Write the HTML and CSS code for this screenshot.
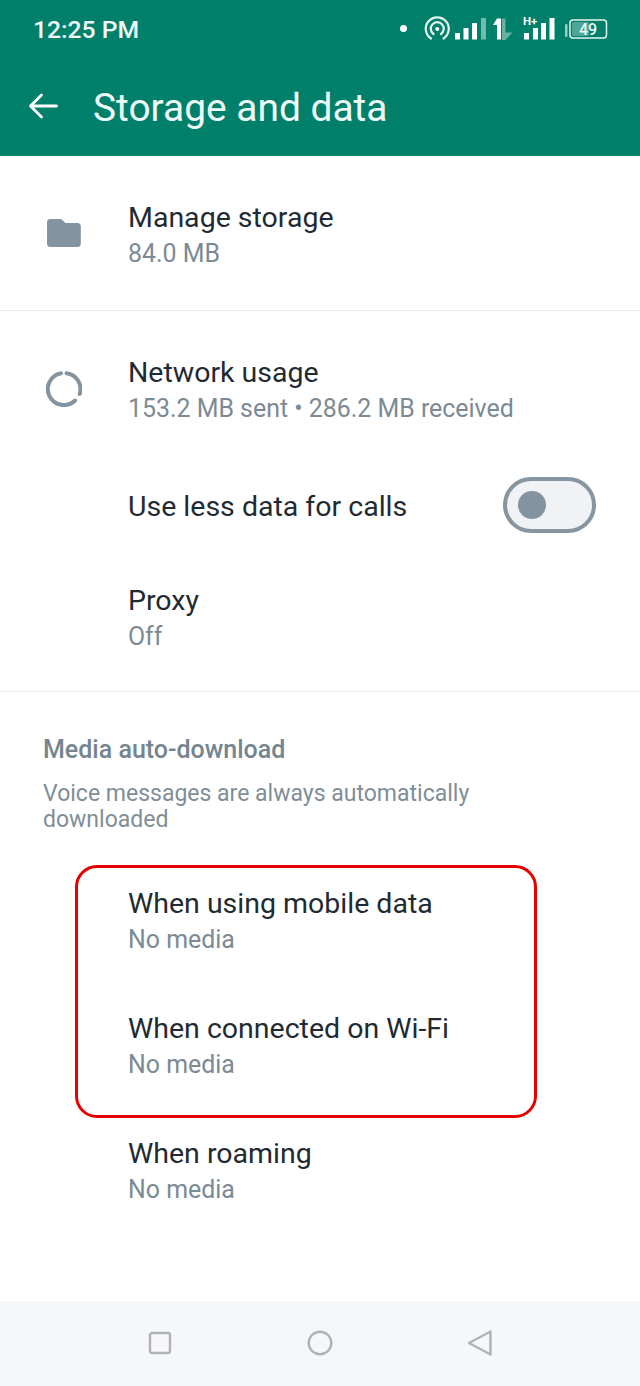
FILE: index.html
```html
<!DOCTYPE html>
<html lang="en">
<head>
<meta charset="utf-8">
<title>Storage and data</title>
<link rel="stylesheet" href="styles.css">
</head>
<body>
<div class="screen">
  <header class="appbar">
    <div class="status">
      <span class="time">12:25 PM</span>
      <svg class="status-icons" width="210" height="38" viewBox="400 10 210 38" fill="#fff">
        <circle cx="403.500" cy="28.500" r="3.500"/>
        <g fill="none" stroke="#e6f4f0" stroke-width="2.200" stroke-linecap="round">
          <path d="M431 38.500a11.500 11.500 0 1 1 12.500 0"/>
          <path d="M433.500 34a6.500 6.500 0 1 1 7.500 0"/>
        </g>
        <circle cx="437.300" cy="29" r="2"/>
        <rect x="455" y="33" width="5" height="6.500"/>
        <rect x="463.500" y="28" width="5" height="11.500"/>
        <rect x="472" y="23" width="5" height="16.500"/>
        <rect x="481" y="18" width="5" height="21.500" opacity=".45"/>
        <path d="M493 25 497 18.500h4v21h-4V25z"/>
        <path d="M502 18.500h3.500v14h7l-7 7.500h-3.500z" opacity=".4"/>
        <text class="hplus" x="523" y="25">H+</text>
        <rect x="524" y="33" width="5" height="6.500"/>
        <rect x="533" y="28" width="5" height="11.500"/>
        <rect x="541" y="23" width="5" height="16.500"/>
        <rect x="549.500" y="18" width="5" height="21.500"/>
        <rect x="565" y="24" width="2.500" height="13" rx="1" opacity=".6"/>
        <rect x="570" y="20" width="36.500" height="18" rx="3" fill="none" stroke="#e6f4f0" stroke-width="1.500"/>
        <rect x="572" y="22" width="17" height="14" rx="1" fill="#fff" opacity=".3"/>
        <text class="batt" x="588" y="34.500" text-anchor="middle">49</text>
      </svg>
    </div>
    <div class="toolbar">
      <svg class="back" width="30" height="30" viewBox="0 0 30 30" fill="none" stroke="#fff" stroke-width="2.800" stroke-linecap="round" stroke-linejoin="round">
        <path d="M28.500 15H2.500M13.500 4 2.500 15l11 11"/>
      </svg>
      <h1 class="title">Storage and data</h1>
    </div>
  </header>

  <main class="content">
    <section class="group group-first">
      <div class="row">
        <div class="icon icon-folder">
          <svg width="34" height="28" viewBox="0 0 34 28" fill="#83939f">
            <path d="M3 0H13c1 0 1.700.3 2.400 1l3 3H30.500c2 0 3.300 1.300 3.300 3.300v17.400c0 2-1.300 3.300-3.300 3.300H3.300C1.300 28 0 26.700 0 24.700V3.300C0 1.300 1.300 0 3 0z"/>
          </svg>
        </div>
        <div class="text">
          <div class="label">Manage storage</div>
          <div class="sub">84.0 MB</div>
        </div>
      </div>
    </section>

    <section class="group">
      <div class="row">
        <div class="icon icon-ring">
          <svg width="36" height="36" viewBox="0 0 36 36" fill="none" stroke="#83939f" stroke-width="4" stroke-linecap="round">
            <path d="M15 2.300A16 16 0 1 0 29 29.500"/>
            <path d="M20.500 2.200A16 16 0 0 1 33.700 23"/>
          </svg>
        </div>
        <div class="text">
          <div class="label">Network usage</div>
          <div class="sub">153.2 MB sent • 286.2 MB received</div>
        </div>
      </div>
      <div class="row row-toggle">
        <div class="icon"></div>
        <div class="text"><div class="label label-toggle">Use less data for calls</div></div>
        <div class="switch"><span class="knob"></span></div>
      </div>
      <div class="row">
        <div class="icon"></div>
        <div class="text">
          <div class="label">Proxy</div>
          <div class="sub">Off</div>
        </div>
      </div>
    </section>

    <section class="group group-last">
      <h2 class="heading">Media auto-download</h2>
      <p class="note">Voice messages are always automatically downloaded</p>
      <div class="media-rows">
        <div class="row">
          <div class="icon"></div>
          <div class="text">
            <div class="label">When using mobile data</div>
            <div class="sub">No media</div>
          </div>
        </div>
        <div class="row">
          <div class="icon"></div>
          <div class="text">
            <div class="label">When connected on Wi-Fi</div>
            <div class="sub">No media</div>
          </div>
        </div>
        <div class="row">
          <div class="icon"></div>
          <div class="text">
            <div class="label">When roaming</div>
            <div class="sub">No media</div>
          </div>
        </div>
        <div class="highlight"></div>
      </div>
    </section>
  </main>

  <nav class="navbar">
    <svg width="26" height="26" viewBox="0 0 26 26" fill="none" stroke="#b0b2b4" stroke-width="2.400" stroke-linejoin="round"><rect x="3" y="3" width="20" height="20" rx="2"/></svg>
    <svg width="26" height="26" viewBox="0 0 26 26" fill="none" stroke="#b0b2b4" stroke-width="2.400"><circle cx="13" cy="13" r="11.300"/></svg>
    <svg width="26" height="26" viewBox="0 0 26 26" fill="none" stroke="#b0b2b4" stroke-width="2.400" stroke-linejoin="round"><path d="M23.500 1.500v23L2 13z"/></svg>
  </nav>
</div>
</body>
</html>
```
FILE: styles.css
```css
* { box-sizing: border-box; }
html, body { margin: 0; padding: 0; background: #fff; }
body { font-family: Roboto, "Noto Sans", sans-serif; }

.screen {
  width: 640px;
  height: 1386px;
  display: flex;
  flex-direction: column;
  overflow: hidden;
}

.appbar { height: 156px; background: #00806a; color: #fff; flex: none; }
.status {
  height: 58px;
  display: flex;
  align-items: center;
  justify-content: space-between;
  padding: 0 30px 0 33px;
}
.time { font-size: 24.700px; font-weight: 500; color: #f1faf7; }
.status-icons { display: block; }
.hplus { font: 700 11.500px Roboto, sans-serif; }
.batt { font: 500 16px Roboto, sans-serif; fill: #eaf6f2; }

.toolbar {
  height: 98px;
  display: flex;
  align-items: center;
  padding: 0 0 0 28px;
  gap: 35px;
}
.back { display: block; flex: none; margin-top: -2px; }
.title { margin: 2px 0 0; font-size: 38.900px; font-weight: 400; line-height: 44px; color: #eefaf6; }

.content { flex: 1; display: flex; flex-direction: column; }
.group { border-bottom: 1px solid #ebeef0; padding: 17px 0 10px; }
.group-first { padding-bottom: 12px; }
.group-last { border-bottom: 0; padding: 43px 0 0; }

.row {
  display: flex;
  align-items: center;
  padding: 27px 44px 27px 0;
}
.row-toggle { padding-top: 0; padding-bottom: 0; height: 103px; }
.icon {
  width: 128px;
  flex: none;
  padding-left: 46px;
  display: flex;
  align-items: center;
}
.icon svg { display: block; }
.icon-folder { padding-left: 47px; }
.icon-folder svg { margin-top: -6px; }
.icon-ring svg { margin-top: -4px; }
.text { flex: 1; min-width: 0; }
.label { font-size: 28.500px; line-height: 36px; color: #1f2b33; }
.label-toggle { margin-top: 5px; }
.sub { font-size: 24.900px; line-height: 35px; color: #7b8a94; }

.switch {
  width: 93px;
  height: 56px;
  flex: none;
  border: 4px solid #8795a0;
  border-radius: 28px;
  background: #f0f2f5;
  display: flex;
  align-items: center;
  padding-left: 10.500px;
}
.knob { width: 28px; height: 28px; border-radius: 50%; background: #83939f; }

.heading {
  margin: 0;
  padding-left: 43px;
  font-size: 25px;
  line-height: 30px;
  font-weight: 500;
  color: #75858f;
}
.note {
  margin: 16px 0 0;
  padding: 0 120px 0 43px;
  font-size: 23px;
  line-height: 26px;
  color: #7f8e97;
}
.media-rows { position: relative; margin-top: 26px; }
.highlight {
  position: absolute;
  left: 75px;
  top: 6px;
  width: 462px;
  height: 253px;
  border: 3.500px solid #e60000;
  border-radius: 22px;
}

.navbar {
  height: 85px;
  flex: none;
  background: #f6f7f9;
  display: flex;
  align-items: center;
  justify-content: center;
  gap: 134px;
  padding-bottom: 2px;
}
.navbar svg { display: block; }
```
